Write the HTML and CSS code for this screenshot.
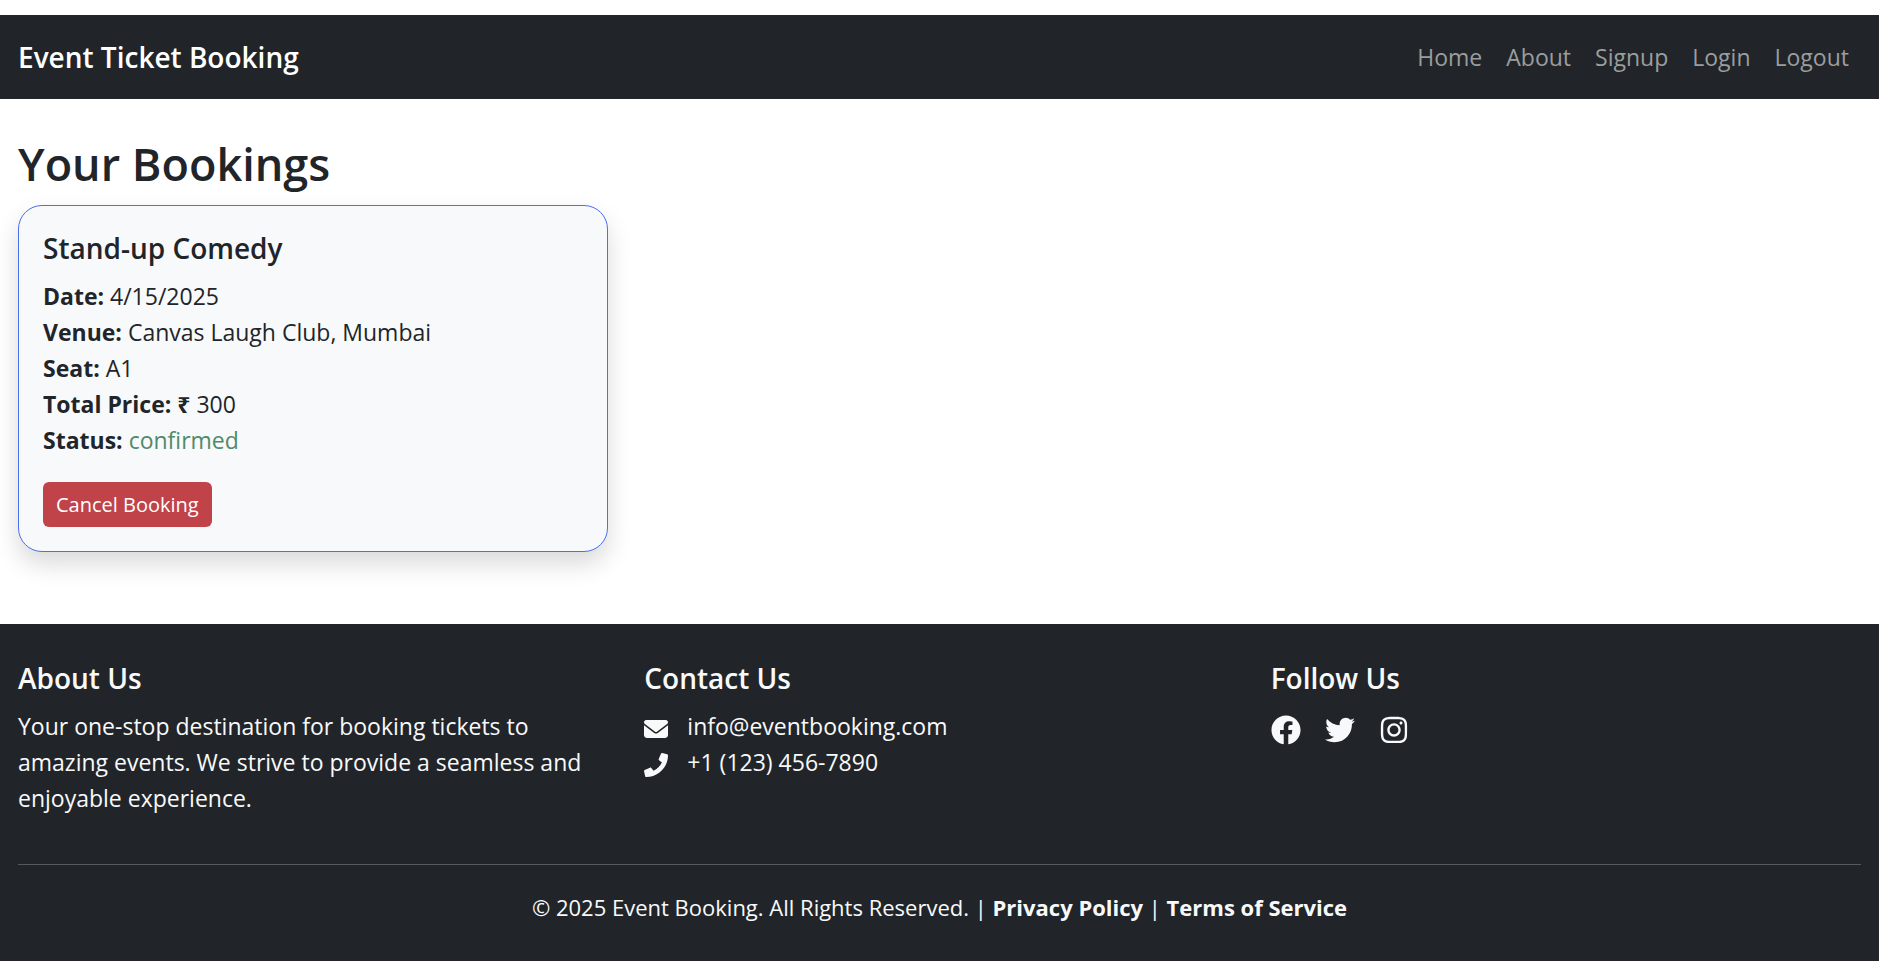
FILE: index.html
```html
<!DOCTYPE html>
<html lang="en">
<head>
<meta charset="utf-8">
<meta name="viewport" content="width=device-width, initial-scale=1">
<title>Event Ticket Booking</title>
<link rel="stylesheet" href="styles.css">
</head>
<body>
<nav class="navbar">
  <a class="brand" href="#">Event Ticket Booking</a>
  <ul class="nav-links">
    <li><a href="#">Home</a></li>
    <li><a href="#">About</a></li>
    <li><a href="#">Signup</a></li>
    <li><a href="#">Login</a></li>
    <li><a href="#">Logout</a></li>
  </ul>
</nav>
<main class="bookings">
  <h1 class="page-title">Your Bookings</h1>
  <div class="columns">
    <article class="card">
      <h2 class="card-title">Stand-up Comedy</h2>
      <p class="card-text">
        <strong>Date:</strong> 4/15/2025<br>
        <strong>Venue:</strong> Canvas Laugh Club, Mumbai<br>
        <strong>Seat:</strong> A1<br>
        <strong>Total Price: ₹</strong> 300<br>
        <strong>Status:</strong> <span class="confirmed">confirmed</span>
      </p>
      <button class="cancel" type="button">Cancel Booking</button>
    </article>
  </div>
</main>
<footer class="footer">
  <div class="columns">
    <section>
      <h2 class="footer-title">About Us</h2>
      <p class="about">Your one-stop destination for booking tickets to amazing events. We strive to provide a seamless and enjoyable experience.</p>
    </section>
    <section>
      <h2 class="footer-title">Contact Us</h2>
      <ul class="contact">
        <li>
          <svg class="contact-icon" viewBox="0 0 512 512" aria-hidden="true"><path d="M48 64C21.500 64 0 85.500 0 112c0 15.100 7.100 29.300 19.200 38.400L236.800 313.600c11.400 8.500 27 8.500 38.400 0L492.800 150.400c12.100-9.100 19.200-23.300 19.200-38.400c0-26.500-21.500-48-48-48H48zM0 176V384c0 35.300 28.700 64 64 64H448c35.300 0 64-28.700 64-64V176L294.400 339.200c-22.800 17.100-54 17.100-76.800 0L0 176z"/></svg>
          <span>info@eventbooking.com</span>
        </li>
        <li>
          <svg class="contact-icon" viewBox="0 0 512 512" aria-hidden="true"><path d="M493.400 24.600l-104-24c-11.300-2.600-22.900 3.300-27.500 13.900l-48 112c-4.200 9.800-1.400 21.300 6.900 28l60.600 49.600c-36 76.700-98.900 140.500-177.200 177.200l-49.600-60.600c-6.800-8.300-18.200-11.100-28-6.900l-112 48C3.900 366.500-2 378.100.6 389.400l24 104C27.100 504.200 36.700 512 48 512c256.100 0 464-207.500 464-464 0-11.200-7.700-20.900-18.600-23.400z"/></svg>
          <span>+1 (123) 456-7890</span>
        </li>
      </ul>
    </section>
    <section>
      <h2 class="footer-title">Follow Us</h2>
      <div class="social">
        <a href="#" aria-label="Facebook"><svg width="30" height="30" viewBox="0 0 512 512"><path d="M504 256C504 119 393 8 256 8S8 119 8 256c0 123.780 90.690 226.380 209.250 245V327.690h-63V256h63v-54.640c0-62.150 37-96.480 93.670-96.480 27.140 0 55.520 4.840 55.520 4.840v61h-31.280c-30.800 0-40.410 19.120-40.410 38.730V256h68.780l-11 71.690h-57.780V501C413.310 482.380 504 379.780 504 256z"/></svg></a>
        <a href="#" aria-label="Twitter"><svg width="30" height="30" viewBox="0 0 512 512"><path d="M459.370 151.716c.325 4.548.325 9.097.325 13.645 0 138.720-105.583 298.558-298.558 298.558-59.452 0-114.680-17.219-161.137-47.106 8.447.974 16.568 1.299 25.340 1.299 49.055 0 94.213-16.568 130.274-44.832-46.132-.975-84.792-31.188-98.112-72.772 6.498.974 12.995 1.624 19.818 1.624 9.421 0 18.843-1.300 27.614-3.573-48.081-9.747-84.143-51.980-84.143-102.985v-1.299c13.969 7.797 30.214 12.670 47.431 13.319-28.264-18.843-46.781-51.005-46.781-87.391 0-19.492 5.197-37.360 14.294-52.954 51.655 63.675 129.300 105.258 216.365 109.807-1.624-7.797-2.599-15.918-2.599-24.040 0-57.828 46.782-104.934 104.934-104.934 30.213 0 57.502 12.670 76.670 33.137 23.715-4.548 46.456-13.320 66.599-25.340-7.798 24.366-24.366 44.833-46.132 57.827 21.117-2.273 41.584-8.122 60.426-16.243-14.292 20.791-32.161 39.308-52.628 54.253z"/></svg></a>
        <a href="#" aria-label="Instagram"><svg width="30" height="30" viewBox="-32 0 512 512"><path d="M224.100 141c-63.600 0-114.900 51.300-114.900 114.900s51.300 114.900 114.900 114.900S339 319.500 339 255.900 287.700 141 224.100 141zm0 189.600c-41.100 0-74.700-33.500-74.700-74.700s33.500-74.700 74.700-74.700 74.700 33.500 74.700 74.700-33.600 74.700-74.700 74.700zm146.400-194.300c0 14.900-12 26.800-26.800 26.800-14.900 0-26.800-12-26.800-26.800s12-26.800 26.800-26.800 26.800 12 26.800 26.800zm76.100 27.200c-1.700-35.900-9.900-67.700-36.200-93.900-26.200-26.200-58-34.400-93.900-36.200-37-2.100-147.900-2.100-184.900 0-35.800 1.700-67.600 9.900-93.900 36.100s-34.400 58-36.200 93.900c-2.100 37-2.100 147.900 0 184.900 1.700 35.900 9.900 67.700 36.200 93.900s58 34.400 93.900 36.200c37 2.100 147.900 2.100 184.900 0 35.900-1.700 67.700-9.900 93.900-36.200 26.200-26.200 34.400-58 36.200-93.900 2.100-37 2.100-147.800 0-184.800zM398.800 388c-7.800 19.600-22.900 34.700-42.600 42.600-29.500 11.700-99.500 9-132.100 9s-102.700 2.600-132.100-9c-19.600-7.800-34.700-22.900-42.600-42.600-11.700-29.500-9-99.500-9-132.100s-2.600-102.700 9-132.100c7.800-19.600 22.900-34.700 42.600-42.600 29.500-11.700 99.500-9 132.100-9s102.700-2.600 132.100 9c19.600 7.800 34.700 22.900 42.600 42.600 11.700 29.500 9 99.500 9 132.100s2.700 102.700-9 132.100z"/></svg></a>
      </div>
    </section>
  </div>
  <hr class="rule">
  <p class="legal">© 2025 Event Booking. All Rights Reserved. | <a href="#">Privacy Policy</a> | <a href="#">Terms of Service</a></p>
</footer>
</body>
</html>
```
FILE: styles.css
```css
* {
  box-sizing: border-box;
}

body {
  margin: 0;
  padding: 15px 3px 0 0;
  background: #fff;
  color: #212529;
  font-family: "Open Sans", "Noto Sans", sans-serif;
  font-size: 23px;
  line-height: 36px;
}

h1, h2, p, ul {
  margin: 0;
  padding: 0;
}

ul {
  list-style: none;
}

a {
  color: inherit;
  text-decoration: none;
}

svg {
  display: block;
  fill: currentColor;
}

.navbar {
  display: flex;
  align-items: center;
  justify-content: space-between;
  padding: 12px 18px;
  background: #212529;
}

.brand {
  color: #fff;
  font-size: 28px;
  font-weight: 600;
}

.nav-links {
  display: flex;
  color: #9b9d9e;
}

.nav-links a {
  display: block;
  padding: 12px;
}

.bookings {
  padding: 36px 18px 72px;
}

.page-title {
  margin-bottom: 12px;
  font-size: 45px;
  font-weight: 600;
  line-height: 58px;
}

.columns {
  display: grid;
  grid-template-columns: repeat(3, 1fr);
  column-gap: 36px;
}

.card {
  padding: 24px;
  border: 1px solid #4a6ff0;
  border-radius: 24px;
  background: #f8f9fa;
  box-shadow: 0 12px 24px rgba(0, 0, 0, 0.15);
}

.card-title,
.footer-title {
  margin-bottom: 12px;
  font-size: 28px;
  font-weight: 600;
}

.card-text {
  margin-bottom: 24px;
}

.card-text strong {
  font-weight: 700;
}

.confirmed {
  color: #4f8a6a;
}

.cancel {
  display: block;
  padding: 6px 13px;
  border: 0;
  border-radius: 6px;
  background: #c04349;
  color: #fff;
  font: inherit;
  font-size: 20px;
  line-height: 33px;
}

.footer {
  padding: 36px 18px;
  background: #212529;
  color: #f8f9fa;
}

.contact li {
  display: flex;
  align-items: center;
  gap: 19px;
}

.contact-icon {
  width: 24px;
  height: 24px;
  margin-top: 6px;
}

.social {
  display: flex;
  gap: 24px;
  padding-top: 7px;
}

.rule {
  height: 1px;
  margin: 48px 0 24px;
  border: 0;
  background: #575a5c;
}

.legal {
  font-size: 22px;
  text-align: center;
}

.legal a {
  font-weight: 700;
}
```
